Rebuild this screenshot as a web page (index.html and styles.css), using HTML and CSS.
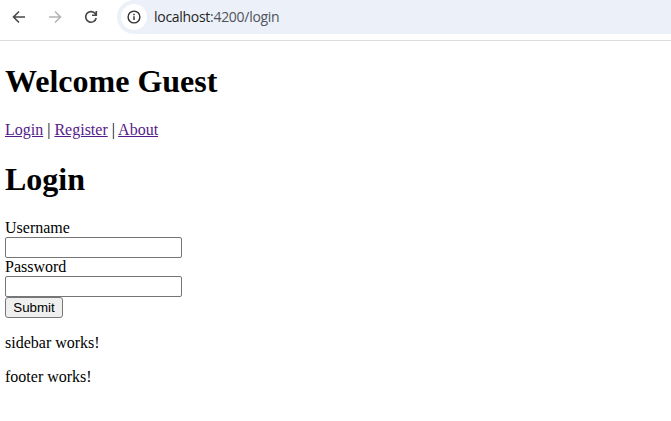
FILE: index.html
```html
<!DOCTYPE html>
<html lang="en">
<head>
<meta charset="utf-8">
<title>Login</title>
<link rel="stylesheet" href="styles.css">
</head>
<body>
<header class="toolbar">
  <svg class="icon back" viewBox="0 0 16 16"><path d="M14 8H3M8 2.5L2.5 8L8 13.5"/></svg>
  <svg class="icon forward" viewBox="0 0 16 16"><path d="M2 8H13M8 2.5L13.5 8L8 13.5"/></svg>
  <svg class="icon reload" viewBox="0 0 16 16"><path d="M13.2 9A5.3 5.3 0 1 1 11.9 4.3L13.2 5.8M13.3 2V6.3H9"/></svg>
  <div class="address">
    <span class="site-info"><svg class="icon" viewBox="0 0 16 16"><circle cx="8" cy="8" r="5.9"/><path d="M8 7.3V11M8 4.8V6.2"/></svg></span>
    <span class="url">localhost<span class="path">:4200/login</span></span>
  </div>
</header>
<main class="page">
  <h1>Welcome Guest</h1>
  <nav><a href="#">Login</a> | <a href="#">Register</a> | <a href="#">About</a></nav>
  <h1>Login</h1>
  <form>
    <label for="user">Username</label>
    <input id="user" type="text">
    <label for="pass">Password</label>
    <input id="pass" type="password">
    <button type="button">Submit</button>
  </form>
  <p>sidebar works!</p>
  <p>footer works!</p>
</main>
</body>
</html>
```
FILE: styles.css
```css
body { margin: 0; background: #fff; color: #000; font: 16px/18px "Liberation Serif", serif; overflow: hidden; }
.toolbar { box-sizing: border-box; height: 41px; border-bottom: 1px solid #dcdcdc; display: flex; align-items: flex-start; padding-left: 11px; }
.icon { width: 16px; height: 16px; fill: none; stroke: #474747; stroke-width: 1.6; flex: none; }
.back, .forward, .reload { margin-top: 9px; }
.forward { margin-left: 20px; stroke: #b4b4b4; }
.reload { margin-left: 20px; }
.address { flex: 1; height: 34px; margin-left: 18px; background: #ecf0f9; border-radius: 17px 0 0 17px; display: flex; align-items: center; }
.site-info { width: 26px; height: 26px; margin-left: 4px; border-radius: 50%; background: #fff; display: flex; align-items: center; justify-content: center; }
.site-info .icon { stroke: #303030; stroke-width: 1.4; }
.url { margin-left: 7px; font: 14px/18px "Open Sans", sans-serif; letter-spacing: -0.29px; color: #1f1f1f; }
.path { color: #50545a; }
.page { display: flow-root; padding-left: 5px; }
h1 { margin: 21.44px 0 20.44px; padding-top: 1px; font-size: 32px; line-height: 37px; }
nav { height: 18px; }
a { color: #551a8b; }
form { display: flex; flex-direction: column; align-items: flex-start; }
input { box-sizing: border-box; width: 177px; height: 21px; border: 1px solid #767676; border-radius: 2px; padding: 1px 2px; margin: 0; background: #fff; }
button { box-sizing: border-box; width: 58px; height: 21px; border: 1px solid #767676; border-radius: 3px; background: #efefef; color: #000; padding: 0; font: 13.333px "Liberation Sans", sans-serif; }
p { margin: 16px 0 0; }
```
